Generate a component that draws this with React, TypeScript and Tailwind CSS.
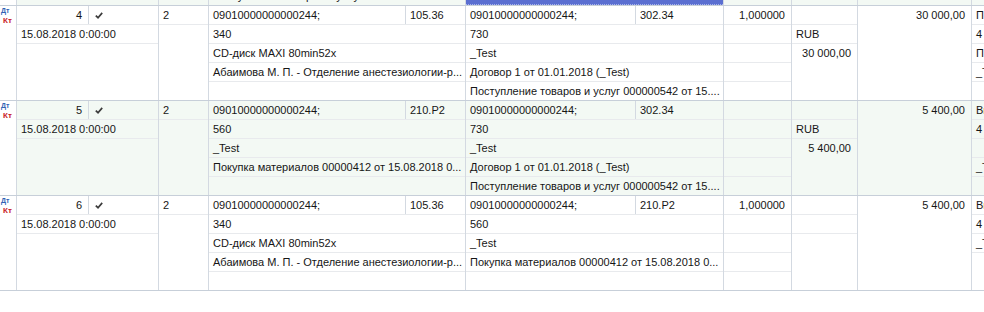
import clsx from "clsx";

type RowData = {
    n: string;
    green: boolean;
    dt: string[];
    kt: string[];
    qty: string;
    cur: string;
    curSum: string;
    sum: string;
    last: string[];
};

const dtCd = ['09010000000000244;', '105.36', '340', 'CD-диск MAXI 80min52x', 'Абаимова М. П. - Отделение анестезиологии-р...', ''];
const dtBuy = ['09010000000000244;', '210.Р2', '560', '_Test', 'Покупка материалов 00000412 от 15.08.2018 0...', ''];
const ktIn = ['09010000000000244;', '302.34', '730', '_Test', 'Договор 1 от 01.01.2018 (_Test)', 'Поступление товаров и услуг 000000542 от 15....'];

const rows: RowData[] = [
    { n: '4', green: false, dt: dtCd, kt: ktIn, qty: '1,000000', cur: 'RUB', curSum: '30 000,00', sum: '30 000,00', last: ['Поступление', '4', 'Прочее', '_Test', ''] },
    { n: '5', green: true, dt: dtBuy, kt: ktIn, qty: '', cur: 'RUB', curSum: '5 400,00', sum: '5 400,00', last: ['Выпуск', '4', '', '_Test', ''] },
    { n: '6', green: false, dt: dtCd, kt: dtBuy, qty: '1,000000', cur: '', curSum: '', sum: '5 400,00', last: ['Выпуск', '4', '_Test'] },
];

// one line of a multi-line cell
function Sub({ text, right, last, className }: { text?: string; right?: boolean; last?: boolean; className?: string }) {
    return (
        <div className={clsx(
            'shrink-0 overflow-hidden whitespace-nowrap pt-[1px] leading-[17px]',
            last ? 'h-[18px]' : 'h-[19px] border-b border-[#e8eaed]',
            right ? 'text-right pr-[6px] pl-[4px]' : 'pl-[4px]',
            className,
        )}>
            {text}
        </div>
    );
}

function Split({ width, a, b }: { width: string; a: string; b: string }) {
    return (
        <div className="flex h-[19px] shrink-0 border-b border-[#e8eaed]">
            <div className={clsx(width, 'shrink-0 border-r border-[#d3d9e1] pl-[4px] pt-[1px] leading-[17px] whitespace-nowrap overflow-hidden')}>{a}</div>
            <div className="flex-1 pl-[4px] pt-[1px] leading-[17px] whitespace-nowrap overflow-hidden">{b}</div>
        </div>
    );
}

function Check() {
    return (
        <svg width="8" height="7" viewBox="0 0 8 7" className="mt-[6px] ml-[6px]">
            <path d="M0.8 3.6 L3 5.7 L7.2 0.9" fill="none" stroke="#3c3c3c" strokeWidth="1.7" />
        </svg>
    );
}

function DtKt() {
    return (
        <div className="flex flex-col font-bold">
            <span className="text-[7px] leading-[7px] text-[#2f62b4] mt-[1px] pl-[1px]">Дт</span>
            <span className="text-[8px] leading-[8px] text-[#c8221e] mt-[3px] pl-[3px]">Кт</span>
        </div>
    );
}

const col = 'shrink-0 flex flex-col border-r border-[#d3d9e1]';

function Row({ r }: { r: RowData }) {
    const bg = r.green ? 'bg-[#f3f9f4]' : 'bg-white';
    return (
        <div className="flex h-[95px] border-b border-[#c7cfd9]">
            <div className={clsx(col, 'w-[17px] bg-white')}>
                <DtKt />
            </div>
            <div className={clsx('flex flex-1', bg)}>
                <div className={clsx(col, 'w-[142px]')}>
                    <div className="flex h-[19px] shrink-0 border-b border-[#e8eaed]">
                        <div className="w-[72px] shrink-0 border-r border-[#d3d9e1] text-right pr-[6px] pt-[1px] leading-[17px]">{r.n}</div>
                        <Check />
                    </div>
                    <Sub text="15.08.2018 0:00:00" />
                </div>
                <div className={clsx(col, 'w-[50px]')}>
                    <Sub text="2" />
                </div>
                <div className={clsx(col, 'w-[257px]')}>
                    <Split width="w-[197px]" a={r.dt[0]} b={r.dt[1]} />
                    {r.dt.slice(2).map((t, i) => <Sub key={i} text={t} last={i === 3} />)}
                </div>
                <div className={clsx(col, 'w-[258px]')}>
                    <Split width="w-[170px]" a={r.kt[0]} b={r.kt[1]} />
                    {r.kt.slice(2).map((t, i) => <Sub key={i} text={t} last={i === 3} />)}
                </div>
                <div className={clsx(col, 'w-[68px]')}>
                    <Sub text={r.qty} right />
                    <Sub />
                    <Sub />
                    <Sub />
                    <Sub last />
                </div>
                <div className={clsx(col, 'w-[66px]')}>
                    <Sub />
                    <Sub text={r.cur} />
                    <Sub text={r.curSum} right last />
                </div>
                <div className={clsx(col, 'w-[114px]')}>
                    <Sub text={r.sum} right last className="pr-[5px]" />
                </div>
                <div className="flex-1 flex flex-col overflow-hidden">
                    {r.last.map((t, i) => <Sub key={i} text={t} className="pl-[3px]" />)}
                </div>
            </div>
        </div>
    );
}

// bottom edge of the row above, scrolled out of view
function Strip() {
    const c = 'shrink-0 flex flex-col justify-end overflow-hidden border-r border-[#d3d9e1]';
    return (
        <div className="flex h-[6px] border-b border-[#c7cfd9] overflow-hidden">
            <div className={clsx(c, 'w-[17px] bg-white')} />
            <div className="flex flex-1 bg-[#f3f9f4]">
                <div className={clsx(c, 'w-[142px]')} />
                <div className={clsx(c, 'w-[50px]')} />
                <div className={clsx(c, 'w-[257px]')}>
                    <div className="h-[18px] shrink-0 pl-[4px] pt-[1px] leading-[17px] whitespace-nowrap">Поступление товаров и услуг 000000542 от 15....</div>
                </div>
                <div className={clsx(c, 'w-[258px]')}>
                    <div className="h-[5px] bg-[#5b6fd1] border-b border-dotted border-[#aab5ec]" />
                </div>
                <div className={clsx(c, 'w-[68px]')} />
                <div className={clsx(c, 'w-[66px]')} />
                <div className={clsx(c, 'w-[114px]')} />
                <div className="flex-1" />
            </div>
        </div>
    );
}

export default function App() {
    return (
        <div className="w-[984px] h-[312px] overflow-hidden bg-white text-[11px] text-[#161616] font-['Liberation_Sans',Arial,sans-serif]">
            <Strip />
            {rows.map((r) => <Row key={r.n} r={r} />)}
        </div>
    );
}
